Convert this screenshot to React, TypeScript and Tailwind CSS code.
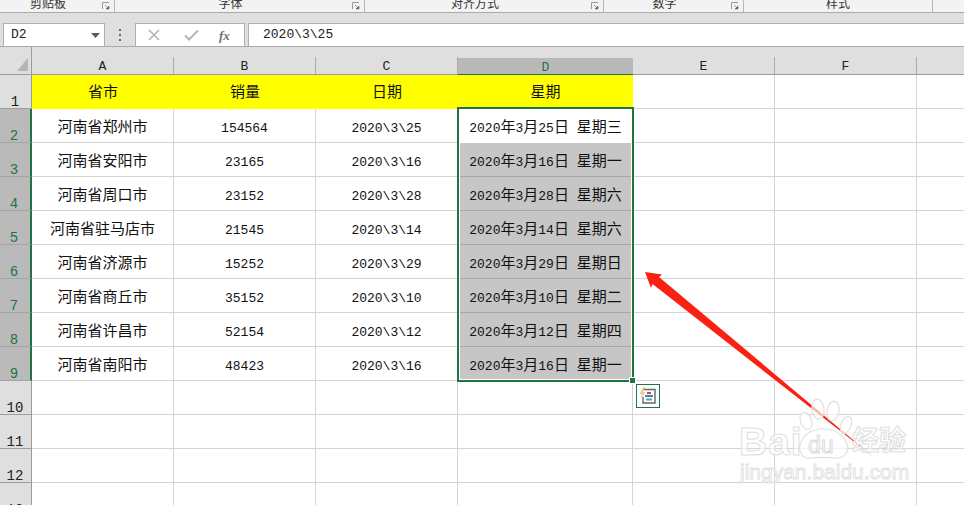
const rows = [
  ['河南省郑州市', '154564', '2020\\3\\25', '2020年3月25日 星期三'],
  ['河南省安阳市', '23165', '2020\\3\\16', '2020年3月16日 星期一'],
  ['河南省周口市', '23152', '2020\\3\\28', '2020年3月28日 星期六'],
  ['河南省驻马店市', '21545', '2020\\3\\14', '2020年3月14日 星期六'],
  ['河南省济源市', '15252', '2020\\3\\29', '2020年3月29日 星期日'],
  ['河南省商丘市', '35152', '2020\\3\\10', '2020年3月10日 星期二'],
  ['河南省许昌市', '52154', '2020\\3\\12', '2020年3月12日 星期四'],
  ['河南省南阳市', '48423', '2020\\3\\16', '2020年3月16日 星期一'],
];

const ribbonGroups = [
  { label: '剪贴板', width: 'w-[115px]', launcher: true },
  { label: '字体', width: 'w-[250px]', launcher: true },
  { label: '对齐方式', width: 'w-[239px]', launcher: true },
  { label: '数字', width: 'w-[140px]', launcher: true },
  { label: '样式', width: 'w-[189px]', launcher: false },
];

// SimSun style: latin runs in a mono face, CJK runs a little larger
function Mix({ text }: { text: string }) {
  const parts = text.split(/([\x00-\x7f]+)/).filter(Boolean);
  return (
    <span className="whitespace-pre">
      {parts.map((p, i) =>
        /^[\x00-\x7f]/.test(p) ? (
          <span key={i} className="font-['Liberation_Mono',monospace] text-[13px]">{p}</span>
        ) : (
          <span key={i} className="font-['Noto_Sans_CJK_SC',sans-serif] text-[15px]">{p}</span>
        )
      )}
    </span>
  );
}

function Launcher() {
  return (
    <div className="w-[18px] shrink-0 pt-[2px] pl-[6px]">
      <svg width="8" height="8" viewBox="0 0 8 8">
        <path d="M0.5 7V0.5H7" fill="none" stroke="#9a9a9a" />
        <path d="M3 3L6 6M7 4V7H4Z" fill="#666" stroke="#666" strokeWidth="0.6" />
      </svg>
    </div>
  );
}

function ColHead({ label, active, last }: { label: string; active?: boolean; last?: boolean }) {
  return (
    <div className="h-[28px] flex flex-col justify-end border-b border-[#9c9c9c]">
      <div
        className={
          active
            ? "h-[17px] pt-[3px] flex items-center justify-center bg-[#b9b9b9] text-[#217346] border-b border-[#217346] -mb-px"
            : last
            ? "h-[17px] pt-[3px] flex items-center justify-center text-[#222]"
            : "h-[17px] pt-[3px] flex items-center justify-center text-[#222] border-r border-[#ababab]"
        }
      >
        <span className="font-['Liberation_Mono',monospace] text-[13px] leading-[14px]">{label}</span>
      </div>
    </div>
  );
}

function RowHead({ n, active }: { n: number; active?: boolean }) {
  return (
    <div
      className={
        active
          ? "h-[34px] flex items-end justify-center pr-[2px] bg-[#bababa] text-[#217346] border-b border-[#a3a3a3] border-r-2 border-r-[#217346]"
          : "h-[34px] flex items-end justify-center pr-[1px] bg-[#dfdfdf] text-[#222] border-b border-[#9c9c9c] border-r border-r-[#9c9c9c]"
      }
    >
      <span className="font-['Liberation_Mono',monospace] text-[14px] leading-[12px]">{n}</span>
    </div>
  );
}

function Cell({ text }: { text: string }) {
  return (
    <div className="h-[34px] pt-[1px] flex items-center justify-center text-[#111] border-r border-b border-[#d4d4d4]">
      <Mix text={text} />
    </div>
  );
}

function Blank() {
  return <div className="h-[34px] border-r border-b border-[#d4d4d4]" />;
}

export default function App() {
  return (
    <div className="relative w-[964px] h-[505px] overflow-hidden bg-white flex flex-col">
      {/* ribbon, only the group captions are left in view */}
      <div className="h-[13px] flex bg-[#f3f3f3] border-b border-[#ababab] overflow-hidden shrink-0">
        {ribbonGroups.map((g) => (
          <div key={g.label} className={`${g.width} flex border-r border-[#b8b8b8]`}>
            <div className="flex-1 text-center -mt-[5px] text-[12px] leading-[16px] text-[#333] font-['Noto_Sans_CJK_SC',sans-serif]">
              {g.label}
            </div>
            {g.launcher && <Launcher />}
          </div>
        ))}
      </div>

      {/* formula bar */}
      <div className="h-[34px] pt-[10px] pl-[3px] flex items-end bg-[#dfdfdf] border-b border-[#ababab] shrink-0">
        <div className="w-[102px] h-[23px] flex items-center justify-between pl-[7px] pr-[4px] bg-white border-x border-t border-[#b0b0b0]">
          <span className="font-['Liberation_Mono',monospace] text-[13px] text-[#222]">D2</span>
          <svg width="9" height="5" viewBox="0 0 9 5">
            <path d="M0 0H9L4.5 5Z" fill="#5c5c5c" />
          </svg>
        </div>
        <div className="w-[30px] h-[23px] flex flex-col items-center justify-center gap-[3px]">
          <div className="w-[2px] h-[2px] bg-[#666]" />
          <div className="w-[2px] h-[2px] bg-[#666]" />
          <div className="w-[2px] h-[2px] bg-[#666]" />
        </div>
        <div className="w-[110px] h-[23px] flex items-center bg-white border-x border-t border-[#b0b0b0]">
          <div className="w-[37px] pl-[12px]">
            <svg width="12" height="12" viewBox="0 0 12 12">
              <path d="M1 1L11 11M11 1L1 11" stroke="#b4b4b4" strokeWidth="1.6" fill="none" />
            </svg>
          </div>
          <div className="w-[46px] pl-[11px]">
            <svg width="15" height="12" viewBox="0 0 15 12">
              <path d="M1 6.5L5 10.5L14 1.5" stroke="#b4b4b4" strokeWidth="2" fill="none" />
            </svg>
          </div>
          <span className="font-['Liberation_Serif',serif] italic font-bold text-[13px] text-[#6e6e6e] leading-none">fx</span>
        </div>
        <div className="w-[3px]" />
        <div className="flex-1 h-[23px] flex items-center pl-[14px] bg-white border-l border-t border-[#b0b0b0]">
          <span className="font-['Liberation_Mono',monospace] text-[13px] text-[#222]">2020\3\25</span>
        </div>
      </div>

      {/* sheet */}
      <div className="relative flex-1 overflow-hidden">
        <div className="grid grid-cols-[32px_142px_142px_142px_175px_142px_142px_1fr]">
          <div className="h-[28px] bg-[#dfdfdf] flex items-end justify-end pr-[3px] pb-[3px] border-b border-r border-[#9c9c9c]">
            <svg width="11" height="13" viewBox="0 0 11 13">
              <path d="M11 0V13H0Z" fill="#b4b4b4" />
            </svg>
          </div>
          <div className="col-span-7 grid grid-cols-[142px_142px_142px_175px_142px_142px_1fr] bg-[#dfdfdf]">
            <ColHead label="A" />
            <ColHead label="B" />
            <ColHead label="C" />
            <ColHead label="D" active />
            <ColHead label="E" />
            <ColHead label="F" />
            <ColHead label="" last />
          </div>

          <RowHead n={1} />
          {['省市', '销量', '日期', '星期'].map((h) => (
            <div key={h} className="h-[34px] pb-[3px] bg-[#ffff00] flex items-center justify-center text-[#111]">
              <Mix text={h} />
            </div>
          ))}
          <Blank />
          <Blank />
          <div className="h-[34px] border-b border-[#d4d4d4]" />

          {rows.map((r, i) => (
            <div key={r[0] + i} className="contents">
              <RowHead n={i + 2} active />
              <Cell text={r[0]} />
              <Cell text={r[1]} />
              <Cell text={r[2]} />
              <div
                className={
                  i === 0
                    ? "h-[34px] pt-[1px] flex items-center justify-center text-[#111] bg-white"
                    : "h-[34px] pt-[1px] flex items-center justify-center text-[#111] bg-[#c6c6c6] border-b border-[#a8a8a8]"
                }
              >
                <Mix text={r[3]} />
              </div>
              <Blank />
              <Blank />
              <div className="h-[34px] border-b border-[#d4d4d4]" />
            </div>
          ))}

          {[10, 11, 12, 13].map((n) => (
            <div key={n} className="contents">
              <RowHead n={n} />
              <Blank />
              <Blank />
              <Blank />
              <Blank />
              <Blank />
              <Blank />
              <div className="h-[34px] border-b border-[#d4d4d4]" />
            </div>
          ))}
        </div>

        {/* selection frame and fill handle */}
        <div className="absolute left-[457px] top-[60px] w-[177px] h-[275px] border-2 border-[#217346]">
          <div className="w-full h-full border border-white" />
          <div className="absolute -right-[4px] -bottom-[4px] w-[7px] h-[7px] bg-[#217346] border border-white" />
        </div>

        {/* quick analysis tag */}
        <div className="absolute left-[636px] top-[337px] w-[24px] h-[24px] flex items-center justify-center bg-white border border-[#217346]">
          <svg width="18" height="18" viewBox="0 0 18 18">
            <path d="M5 2.5H16V16H4V10" fill="none" stroke="#666" strokeWidth="1.4" />
            <path d="M4 0L0.5 7H3L1.5 12L6.5 5H4L6 0Z" fill="#f0c888" />
            <rect x="8" y="5" width="4" height="2" fill="#d0452f" />
            <rect x="6" y="8" width="8" height="2" fill="#3a82c4" />
            <rect x="7" y="11.5" width="6" height="2" fill="#5da88e" />
          </svg>
        </div>
      </div>

      {/* red arrow drawn on the screenshot */}
      <svg className="absolute left-0 top-0 pointer-events-none" width="964" height="505" viewBox="0 0 964 505">
        <path d="M645 272L662 274.5L659 277L873.5 457L652.5 284L651 288Z" fill="#fb2112" />
      </svg>

      {/* baidu watermark */}
      <svg className="absolute left-[795px] top-[398px] pointer-events-none" width="62" height="66" viewBox="0 0 62 66">
        <g fill="#ffffff" fillOpacity="0.65" stroke="#e0e0e0" strokeWidth="1.2">
          <ellipse cx="11" cy="23" rx="5.5" ry="9" transform="rotate(-20 11 23)" />
          <ellipse cx="23" cy="11" rx="6" ry="10" transform="rotate(-8 23 11)" />
          <ellipse cx="38" cy="13" rx="6" ry="10" transform="rotate(10 38 13)" />
          <ellipse cx="51" cy="27" rx="5" ry="9" transform="rotate(22 51 27)" />
          <path d="M7 42C14 28 40 26 50 42C57 53 50 61 38 60C30 59 24 59 16 60C5 61 2 51 7 42Z" />
        </g>
      </svg>
      <div className="absolute left-[739px] top-[420px] text-[39px] leading-[44px] font-bold tracking-[1px] text-white/60 [-webkit-text-stroke:1px_#dedede] font-['Liberation_Sans',sans-serif] pointer-events-none">
        Bai
      </div>
      <div className="absolute left-[808px] top-[431px] text-[23px] leading-[28px] text-white/60 [-webkit-text-stroke:1px_#dadada] font-['Liberation_Sans',sans-serif] pointer-events-none">
        du
      </div>
      <div className="absolute left-[852px] top-[421px] text-[27px] leading-[36px] font-bold text-white/60 [-webkit-text-stroke:1px_#dedede] font-['Noto_Sans_CJK_SC',sans-serif] pointer-events-none">
        经验
      </div>
      <div className="absolute left-[740px] top-[459px] text-[21px] leading-[26px] text-white/60 [-webkit-text-stroke:1px_#e2e2e2] font-['Liberation_Sans',sans-serif] pointer-events-none">
        jingyan.baidu.com
      </div>
    </div>
  );
}
